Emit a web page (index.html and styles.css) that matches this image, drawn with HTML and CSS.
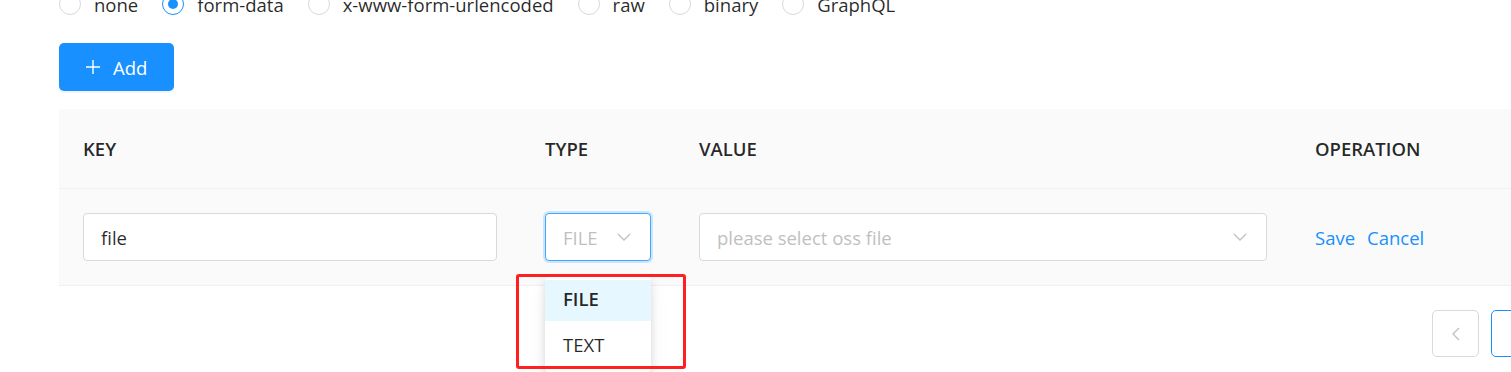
FILE: index.html
```html
<!DOCTYPE html>
<html lang="en">
<head>
    <meta charset="UTF-8" />
    <title>Body form-data</title>
    <link rel="stylesheet" href="styles.css">
</head>
<body>
<div class="page">
    <!-- Tipo de body -->
    <div class="radio-group">
        <label class="radio"><span class="radio-dot"></span>none</label>
        <label class="radio checked"><span class="radio-dot"></span>form-data</label>
        <label class="radio"><span class="radio-dot"></span>x-www-form-urlencoded</label>
        <label class="radio"><span class="radio-dot"></span>raw</label>
        <label class="radio"><span class="radio-dot"></span>binary</label>
        <label class="radio"><span class="radio-dot"></span>GraphQL</label>
    </div>

    <button class="btn-primary">
        <svg width="16" height="16" viewBox="0 0 16 16"><path d="M8 1v14M1 8h14" stroke="#fff" stroke-width="1.4" fill="none"/></svg>
        Add
    </button>

    <table class="table">
        <colgroup>
            <col class="col-key"><col class="col-type"><col class="col-value"><col>
        </colgroup>
        <thead>
            <tr><th>KEY</th><th>TYPE</th><th>VALUE</th><th>OPERATION</th></tr>
        </thead>
        <tbody>
            <tr>
                <td><div class="input">file</div></td>
                <td class="type-cell">
                    <div class="select focused">
                        <span class="muted">FILE</span>
                        <svg class="arrow" width="16" height="16" viewBox="0 0 16 16"><path d="M2 5l6 6 6-6" stroke="#bfbfbf" stroke-width="1.3" fill="none"/></svg>
                    </div>
                    <div class="dropdown">
                        <div class="option active">FILE</div>
                        <div class="option">TEXT</div>
                    </div>
                    <div class="highlight"></div>
                </td>
                <td>
                    <div class="select">
                        <span class="muted">please select oss file</span>
                        <svg class="arrow" width="16" height="16" viewBox="0 0 16 16"><path d="M2 5l6 6 6-6" stroke="#bfbfbf" stroke-width="1.3" fill="none"/></svg>
                    </div>
                </td>
                <td><a class="link">Save</a><a class="link">Cancel</a></td>
            </tr>
        </tbody>
    </table>

    <div class="pagination">
        <div class="page-btn">
            <svg width="16" height="16" viewBox="0 0 16 16"><path d="M11 2L5 8l6 6" stroke="#bfbfbf" stroke-width="1.3" fill="none"/></svg>
        </div>
        <div class="page-btn current"></div>
    </div>
</div>
</body>
</html>
```

FILE: styles.css
```css
html, body {
    height: 372px;
}

body {
    margin: 0;
    overflow: hidden;
    font-family: "Open Sans", "Noto Sans", Arial, sans-serif;
    font-size: 18.5px;
    color: rgba(0, 0, 0, 0.85);
    background-color: #fff;
}

.page {
    width: 1479px;
    padding-left: 59px;
}

/* Radios */
.radio-group {
    display: flex;
    align-items: center;
    height: 24px;
    margin-top: -8px;
}

.radio {
    display: flex;
    align-items: center;
    margin-right: 24px;
}

.radio-dot {
    width: 22px;
    height: 22px;
    border: 1px solid #d9d9d9;
    border-radius: 50%;
    box-sizing: border-box;
    margin-right: 13px;
    position: relative;
}

.radio.checked .radio-dot {
    border-color: #1890ff;
}

.radio.checked .radio-dot::after {
    content: "";
    position: absolute;
    left: 5px;
    top: 5px;
    width: 10px;
    height: 10px;
    border-radius: 50%;
    background-color: #1890ff;
}

/* Botón */
.btn-primary {
    display: flex;
    align-items: center;
    gap: 12px;
    margin-top: 27px;
    height: 48px;
    width: 115px;
    padding: 0 0 0 26px;
    background-color: #1890ff;
    color: #fff;
    border: none;
    border-radius: 5px;
    font-family: inherit;
    font-size: 18.5px;
    box-shadow: 0 2px 0 rgba(0, 0, 0, 0.045);
}

/* Tabla */
.table {
    margin-top: 18px;
    width: 100%;
    border-collapse: collapse;
    table-layout: fixed;
    background-color: #fafafa;
}

.col-key { width: 462px; }
.col-type { width: 154px; }
.col-value { width: 616px; }

.table th {
    height: 79px;
    padding: 0 24px;
    text-align: left;
    font-weight: 600;
    border-bottom: 1px solid #f0f0f0;
}

.table td {
    height: 96px;
    padding: 0 24px;
    border-bottom: 1px solid #f0f0f0;
}

.input, .select {
    height: 48px;
    box-sizing: border-box;
    border: 1px solid #d9d9d9;
    border-radius: 4px;
    background-color: #fff;
    padding: 0 17px;
    display: flex;
    align-items: center;
}

.select {
    justify-content: space-between;
    padding-right: 18px;
}

.select.focused {
    border-color: #40a9ff;
    box-shadow: 0 0 0 2px rgba(24, 144, 255, 0.2);
}

.muted {
    color: #bfbfbf;
}

.link {
    color: #1890ff;
    margin-right: 12px;
    cursor: pointer;
}

/* Desplegable */
.type-cell {
    position: relative;
}

.dropdown {
    position: absolute;
    left: 24px;
    top: 88px;
    width: 106px;
    padding: 3px 0;
    background-color: #fff;
    border-radius: 4px;
    box-shadow: 0 3px 8px rgba(0, 0, 0, 0.12), 0 8px 20px rgba(0, 0, 0, 0.06);
    z-index: 2;
}

.option {
    padding: 0 18px;
}

.option.active {
    background-color: #e6f7ff;
    font-weight: 600;
    height: 41px;
    line-height: 37px;
    padding-bottom: 4px;
    box-sizing: border-box;
}

.option + .option {
    height: 48px;
    line-height: 48px;
}

.highlight {
    position: absolute;
    left: -5px;
    top: 85px;
    width: 164px;
    height: 89px;
    border: 3px solid #ff1f1f;
    border-radius: 3px;
    z-index: 3;
}

/* Paginación */
.pagination {
    display: flex;
    justify-content: flex-end;
    gap: 12px;
    margin-top: 24px;
}

.page-btn {
    width: 47px;
    height: 47px;
    box-sizing: border-box;
    border: 1px solid #d9d9d9;
    border-radius: 5px;
    display: flex;
    align-items: center;
    justify-content: center;
}

.page-btn.current {
    border-color: #1890ff;
}
```
